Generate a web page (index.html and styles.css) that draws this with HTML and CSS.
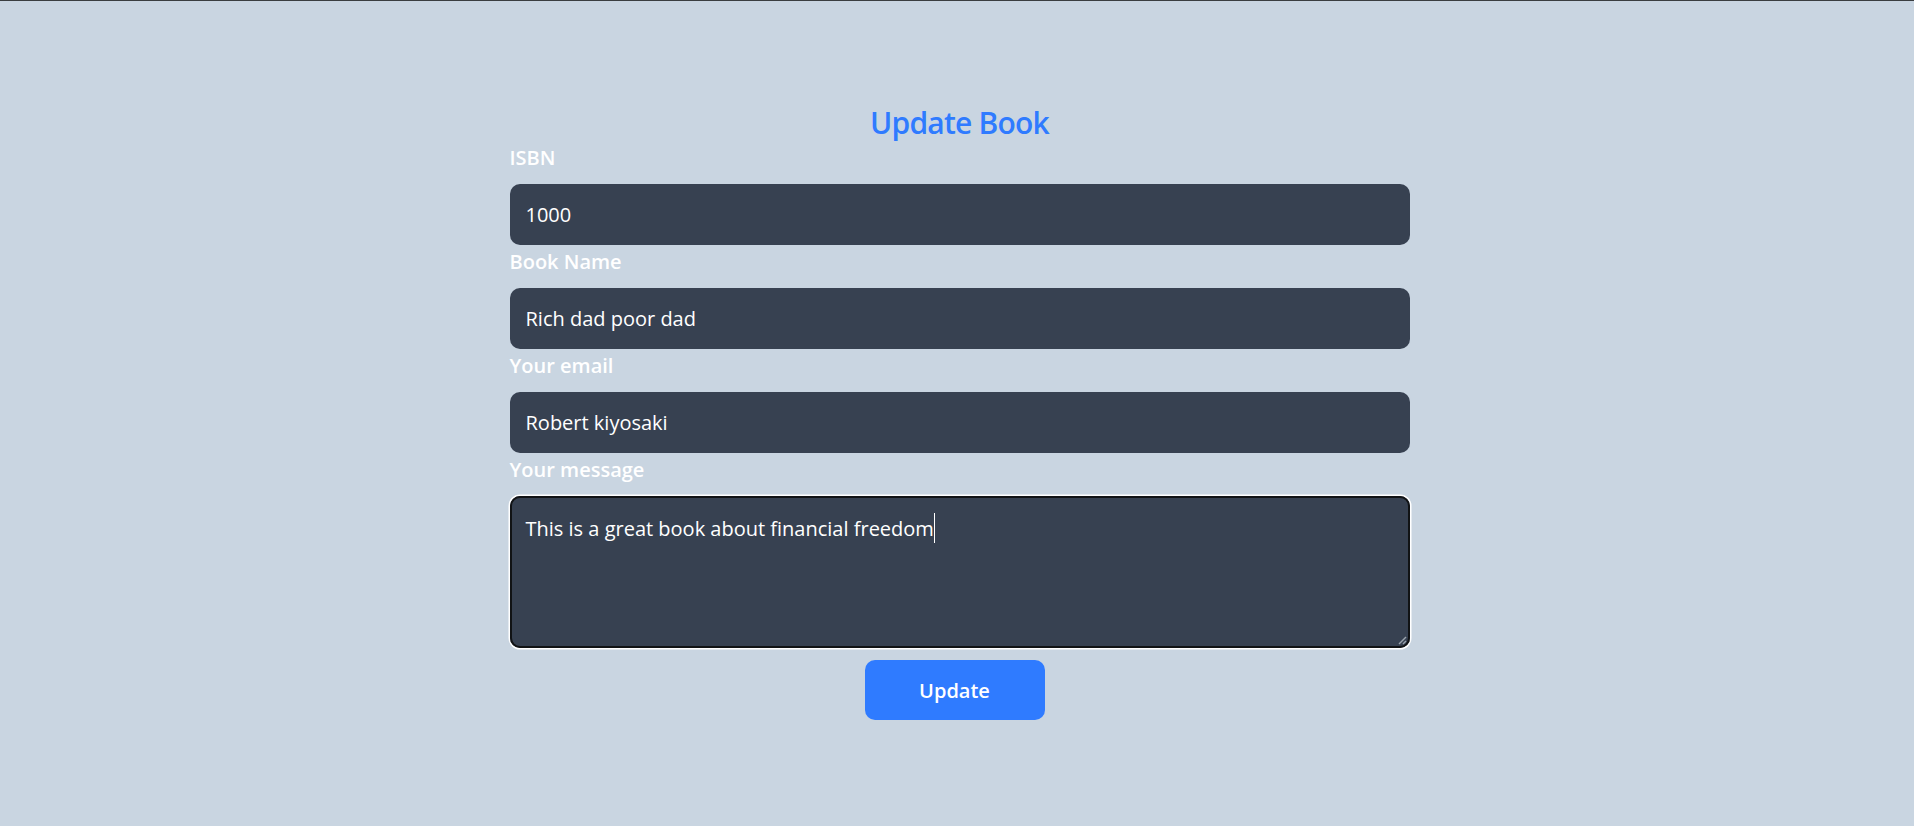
FILE: index.html
```html
<!DOCTYPE html>
<html lang="en">
<head>
<meta charset="utf-8">
<title>Update Book</title>
<link rel="stylesheet" href="styles.css">
</head>
<body>
<div class="topline"></div>
<main class="page">
  <form class="form">
    <h1 class="title">Update Book</h1>
    <label class="field-label">ISBN</label>
    <div class="input">1000</div>
    <label class="field-label">Book Name</label>
    <div class="input">Rich dad poor dad</div>
    <label class="field-label">Your email</label>
    <div class="input">Robert kiyosaki</div>
    <label class="field-label">Your message</label>
    <div class="textarea">This is a great book about financial freedom<span class="caret"></span>
      <svg class="grip" width="10" height="10" viewBox="0 0 10 10"><line x1="9" y1="2" x2="2" y2="9" stroke="#9aa3ad" stroke-width="1.4"/><line x1="9" y1="6" x2="6" y2="9" stroke="#9aa3ad" stroke-width="1.4"/></svg>
    </div>
    <div class="actions"><button type="button" class="btn">Update</button></div>
  </form>
</main>
</body>
</html>
```
FILE: styles.css
```css
* { box-sizing: border-box; }
html, body { margin: 0; padding: 0; }
body {
  background: #c9d5e1;
  font-family: "Open Sans", "Noto Sans", sans-serif;
  height: 826px;
  overflow: hidden;
}
.topline { height: 1px; background: #3a3d40; }
.page {
  padding-top: 99px;
  padding-left: 5px;
}
.form {
  width: 900px;
  margin: 0 auto;
}
.title {
  margin: 3px 0 1px;
  text-align: center;
  font-size: 30px;
  line-height: 40px;
  font-weight: 600;
  letter-spacing: -0.8px;
  color: #2f7bff;
}
.field-label {
  display: block;
  color: #ffffff;
  font-size: 20px;
  line-height: 28px;
  font-weight: 600;
  margin-bottom: 12px;
}
.input {
  height: 61px;
  margin-bottom: 3px;
  background: #374151;
  border-radius: 10px;
  color: #ffffff;
  font-size: 20px;
  line-height: 61px;
  padding: 0 16px;
}
.textarea {
  position: relative;
  height: 152px;
  background: #374151;
  border-radius: 10px;
  color: #ffffff;
  font-size: 20px;
  line-height: 28px;
  padding: 17px 16px;
  box-shadow: inset 0 0 0 2px #111315, 0 0 0 1.5px #ffffff;
}
.caret {
  display: inline-block;
  width: 1.5px;
  height: 30px;
  background: #ffffff;
  vertical-align: -7px;
}
.grip {
  position: absolute;
  right: 3px;
  bottom: 3px;
}
.actions {
  display: flex;
  justify-content: center;
  margin-top: 12px;
}
.btn {
  width: 180px;
  height: 60px;
  border: none;
  border-radius: 10px;
  background: #2f7bff;
  color: #ffffff;
  font-family: inherit;
  font-size: 20px;
  font-weight: 600;
  margin-right: 10px;
}
```
